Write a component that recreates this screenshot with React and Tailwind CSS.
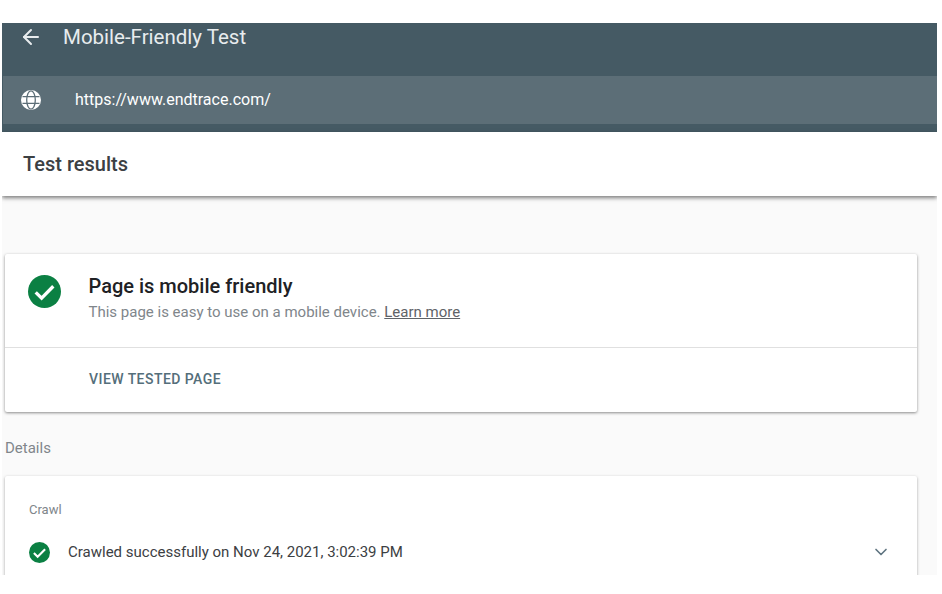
import React from 'react';
import { ArrowLeft, ChevronDown } from 'lucide-react';

const CheckBadge = ({ size }) => (
  <svg width={size} height={size} viewBox="0 0 24 24" className="shrink-0">
    <circle cx="12" cy="12" r="12" fill="#0b8043" />
    <path d="M5.6 12.6l4.3 4.3 8.5-8.7" fill="none" stroke="#fff" strokeWidth="2.4" />
  </svg>
);

const Globe = () => (
  <svg width="20" height="20" viewBox="0 0 20 20" className="shrink-0">
    <circle cx="10" cy="10" r="10" fill="#fff" />
    <g fill="none" stroke="#5c6e77" strokeWidth="1.3">
      <ellipse cx="10" cy="10" rx="4.3" ry="9.2" />
      <path d="M1.5 6.6h17M1.5 13.4h17" />
    </g>
  </svg>
);

const App = () => {
  return (
    <div className="w-[942px] h-[594px] bg-white pt-[23px] pl-[2px] pr-[5px] overflow-hidden font-['Roboto',sans-serif]">
      <div className="h-[552px] bg-[#fafafa] overflow-hidden">
        <header className="h-[109px] bg-[#455a64] flex flex-col">
          <div className="h-[53px] flex items-start pl-[17px] pt-[2px] text-[#e8ecee]">
            <ArrowLeft size={24} strokeWidth={2} />
            <h1 className="ml-[20px] text-[20.5px] leading-[24px]">Mobile-Friendly Test</h1>
          </div>
          <div className="ml-[1px] h-[48px] bg-[#5c6e77] flex items-center pl-[18px] text-white">
            <Globe />
            <span className="ml-[34px] text-[16px]">https://www.endtrace.com/</span>
          </div>
        </header>

        <div className="h-[64px] bg-white flex items-center pl-[21px] shadow-[0_2px_4px_rgba(0,0,0,0.5)] relative">
          <h2 className="text-[20px] font-medium text-[#3c4043] leading-[24px]">Test results</h2>
        </div>

        <div className="pt-[58px] pl-[3px] pr-[20px]">
          <section className="h-[158px] bg-white rounded-[2px] shadow-[0_1px_3px_rgba(0,0,0,0.45)]">
            <div className="h-[94px] flex border-b border-[#e0e0e0] pl-[23px] pt-[21px]">
              <CheckBadge size={33} />
              <div className="ml-[27.5px] -mt-[1px]">
                <h3 className="text-[20px] leading-[24px] font-medium text-[#202124]">Page is mobile friendly</h3>
                <p className="mt-[4px] text-[15px] leading-[20px] text-[#80868b]">
                  This page is easy to use on a mobile device. <a className="underline text-[#5f6368]">Learn more</a>
                </p>
              </div>
            </div>
            <div className="h-[63px] flex items-center pl-[84px] text-[14px] font-medium tracking-[0.45px] text-[#546e7a]">VIEW TESTED PAGE</div>
          </section>

          <p className="mt-[26px] h-[20px] text-[15px] leading-[20px] text-[#80868b]">Details</p>

          <section className="mt-[18px] bg-white rounded-[2px] shadow-[0_1px_3px_rgba(0,0,0,0.35)] h-[140px] pt-[26px] pl-[24px] pr-[26px]">
            <div className="text-[13px] leading-[15px] text-[#80868b]">Crawl</div>
            <div className="mt-[24px] flex items-center h-[22px]">
              <CheckBadge size={21} />
              <span className="ml-[18px] text-[15px] text-[#3c4043]">Crawled successfully on Nov 24, 2021, 3:02:39 PM</span>
              <ChevronDown size={20} className="ml-auto text-[#5f7480]" />
            </div>
          </section>
        </div>
      </div>
    </div>
  );
};

export default App;
